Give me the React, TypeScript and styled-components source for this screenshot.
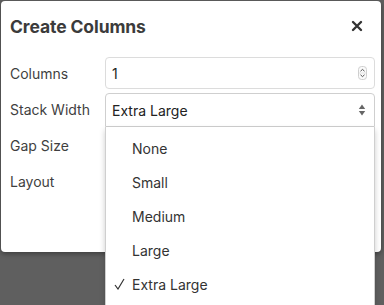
import React from 'react';
import styled, { createGlobalStyle } from 'styled-components';

const GlobalStyle = createGlobalStyle`
  html, body {
    margin: 0;
    padding: 0;
    background: #5f5f5f;
    font-family: Inter, "Noto Sans", sans-serif;
  }
`;

const stackWidths = ['None', 'Small', 'Medium', 'Large', 'Extra Large'];

const App = (): JSX.Element => {
  const selected = 'Extra Large';

  return (
    <>
      <GlobalStyle />
      <Screen>
        <Modal>
          <Header>
            <Title>Create Columns</Title>
            <CloseButton aria-label="Close">
              <svg width="12" height="12" viewBox="0 0 12 12">
                <path d="M2 2 L10 10 M10 2 L2 10" stroke="#333" strokeWidth="2.4" strokeLinecap="round" />
              </svg>
            </CloseButton>
          </Header>
          <Form>
            <Label>Columns</Label>
            <Field>
              <FieldText>1</FieldText>
              <Spinner>
                <svg width="9" height="14" viewBox="0 0 9 14">
                  <rect x="0.5" y="0.5" width="8" height="13" rx="3" fill="#fafafa" stroke="#cfcfcf" />
                  <path d="M2.5 5.2 L4.5 3.4 L6.5 5.2" fill="none" stroke="#555" strokeWidth="1" />
                  <path d="M2.5 8.8 L4.5 10.6 L6.5 8.8" fill="none" stroke="#555" strokeWidth="1" />
                  <path d="M1 7 H8" stroke="#ddd" strokeWidth="0.8" />
                </svg>
              </Spinner>
            </Field>
            <Label>Stack Width</Label>
            <SelectWrap>
              <Field open>
                <FieldText>{selected}</FieldText>
                <svg width="8" height="14" viewBox="0 0 8 14">
                  <path d="M4 1.5 L7.2 6 H0.8 Z" fill="#666" />
                  <path d="M4 12.5 L7.2 8 H0.8 Z" fill="#666" />
                </svg>
              </Field>
              <Menu>
                {stackWidths.map((option) => (
                  <Option key={option}>
                    <Check>
                      {option === selected && (
                        <svg width="11" height="12" viewBox="0 0 11 12">
                          <path d="M1 7 L4 11 L10 1" fill="none" stroke="#333" strokeWidth="1.2" />
                        </svg>
                      )}
                    </Check>
                    {option}
                  </Option>
                ))}
              </Menu>
            </SelectWrap>
            <Label>Gap Size</Label>
            <Spacer />
            <Label>Layout</Label>
            <Spacer />
          </Form>
        </Modal>
      </Screen>
    </>
  );
};

const Screen = styled.div`
  width: 384px;
  height: 305px;
  padding: 1px 0 0 1px;
  box-sizing: border-box;
  overflow: hidden;
`;

const Modal = styled.div`
  width: 380px;
  height: 251px;
  background: #fff;
  border-radius: 4px;
  box-shadow: 0 2px 5px rgba(0, 0, 0, 0.35);
  box-sizing: border-box;
  padding: 0 6px 0 9px;
`;

const Header = styled.div`
  display: flex;
  align-items: center;
  justify-content: space-between;
  height: 50px;
  padding-right: 12px;
`;

const Title = styled.h1`
  margin: 0;
  font-size: 17.5px;
  font-weight: 700;
  color: #3b3b3b;
  letter-spacing: -0.1px;
`;

const CloseButton = styled.button`
  display: flex;
  align-items: center;
  justify-content: center;
  border: none;
  background: none;
  padding: 0;
  cursor: pointer;
`;

const Form = styled.div`
  display: grid;
  grid-template-columns: 95px 1fr;
  grid-auto-rows: 32px;
  row-gap: 4px;
  margin-top: 6px;
`;

const Label = styled.span`
  display: flex;
  align-items: center;
  font-size: 14px;
  color: #3f3f3f;
`;

const Field = styled.div<{ open?: boolean }>`
  display: flex;
  align-items: center;
  justify-content: space-between;
  height: 32px;
  box-sizing: border-box;
  padding: 0 8px 0 6px;
  border: 1px solid #dcdcdc;
  border-radius: ${({ open }) => (open ? '4px 4px 0 0' : '4px')};
  background: #fff;
  ${({ open }) => open && 'height: 34px; border-color: #cfcfcf;'}
`;

const FieldText = styled.span`
  font-size: 14px;
  color: #222;
`;

const Spinner = styled.span`
  display: flex;
  margin-right: -1px;
`;

const SelectWrap = styled.div`
  position: relative;
`;

const Menu = styled.ul`
  position: absolute;
  top: 34px;
  left: 0;
  right: 0;
  margin: 0;
  padding: 4px 0 4px;
  list-style: none;
  background: #fff;
  border: 1px solid #cfcfcf;
  border-top: none;
  box-shadow: 0 3px 6px rgba(0, 0, 0, 0.2);
  z-index: 2;
`;

const Option = styled.li`
  display: flex;
  align-items: center;
  height: 34px;
  font-size: 14px;
  color: #333;
`;

const Check = styled.span`
  display: flex;
  align-items: center;
  width: 26px;
  padding-left: 8px;
  box-sizing: border-box;
`;

const Spacer = styled.div``;

export default App;
